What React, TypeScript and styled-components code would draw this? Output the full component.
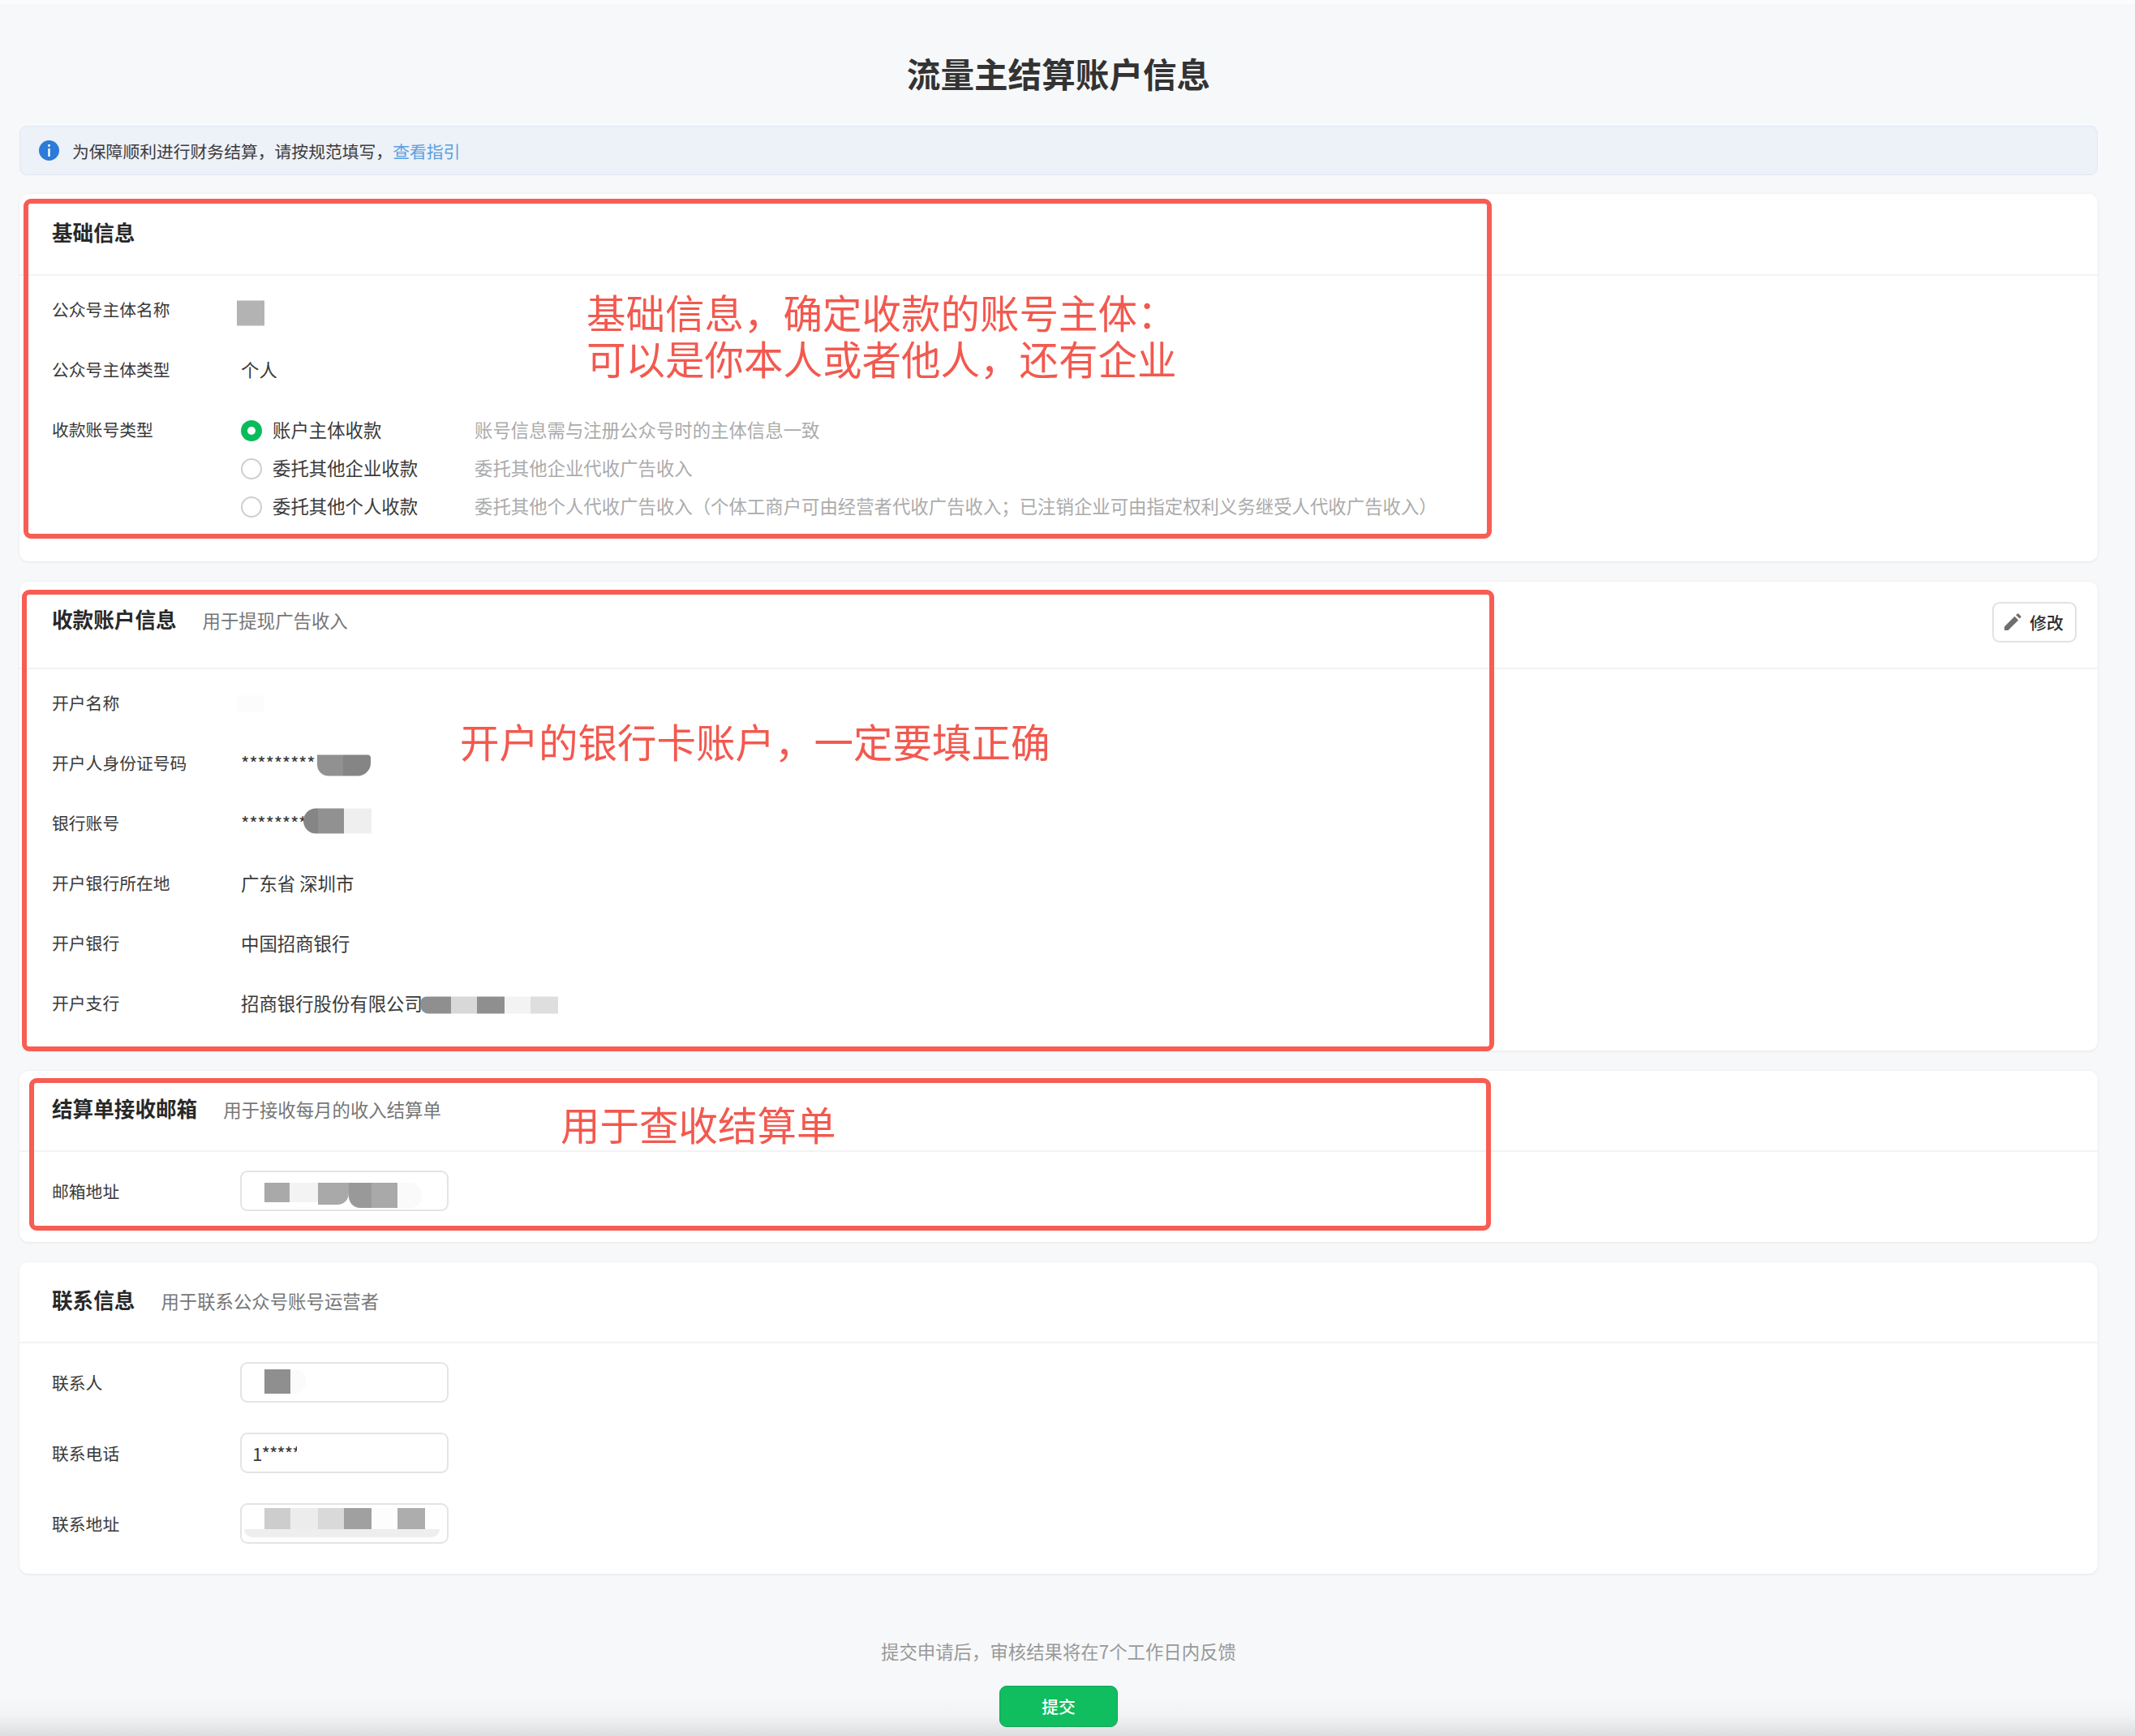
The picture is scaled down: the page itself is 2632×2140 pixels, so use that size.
import React from "react";
import styled, { createGlobalStyle } from "styled-components";

const Global = createGlobalStyle`
  html, body { margin: 0; padding: 0; background: #f7f8fa; }
  body { font-family: "Noto Sans CJK SC", "Noto Sans", sans-serif; color: #333; }
  * { box-sizing: border-box; }
`;

const Page = styled.div`
  width: 2632px;
  height: 2140px;
  overflow: hidden;
  padding: 0 46px 0 24px;
  border-top: 5px solid #fcfcfc;
  background: linear-gradient(to bottom, #f7f8fa 0, #f7f8fa 2085px, #f2f3f4 2110px, #dddee0 2135px);
`;

const Title = styled.h1`
  margin: 0;
  height: 150px;
  padding-top: 63px;
  font-size: 41.6px;
  line-height: 44px;
  font-weight: 600;
  text-align: center;
  color: #333;
`;

const Notice = styled.div`
  height: 61px;
  margin-bottom: 23px;
  padding-left: 23px;
  display: flex;
  align-items: center;
  gap: 16px;
  background: #edf1f8;
  border: 1.5px solid #e0e7f3;
  border-radius: 9px;
  font-size: 20.8px;
  color: #3c3c3c;
`;

const NoticeLink = styled.a`
  color: #5a9fe0;
`;

const Card = styled.section`
  position: relative;
  background: #fff;
  border-radius: 11px;
  box-shadow: 0 0 3px rgba(0, 0, 0, 0.07), 0 2px 3px rgba(0, 0, 0, 0.03);
  margin-bottom: 25px;
`;

const CardHeader = styled.header<{ $h: number; $top?: number }>`
  height: ${(p) => p.$h}px;
  padding: ${(p) => p.$top ?? 30}px 40px 0;
  display: flex;
  align-items: flex-start;
  justify-content: space-between;
  border-bottom: 2px solid #f3f3f3;
`;

const HeadText = styled.div`
  display: flex;
  align-items: baseline;
  gap: 32px;
`;

const CardTitle = styled.h2`
  margin: 0;
  font-size: 25.6px;
  line-height: 32px;
  font-weight: 700;
  color: #282828;
`;

const CardSub = styled.span`
  font-size: 22.4px;
  line-height: 32px;
  color: #767676;
`;

const EditButton = styled.button`
  margin-top: -5px;
  margin-right: -14px;
  width: 104px;
  height: 50px;
  padding: 0 2px 0 0;
  display: flex;
  align-items: center;
  justify-content: center;
  gap: 10px;
  background: #fff;
  border: 2px solid #e2e2e2;
  border-radius: 9px;
  font-family: inherit;
  font-size: 20.8px;
  font-weight: 500;
  color: #2e2e2e;
`;

const Rows = styled.div<{ $bottom: number }>`
  padding: 6px 40px ${(p) => p.$bottom}px;
`;

const Row = styled.div`
  display: flex;
  align-items: flex-start;
  padding: 21px 0;
`;

const Label = styled.div`
  width: 233px;
  flex: none;
  height: 32px;
  font-size: 20.8px;
  line-height: 29px;
  color: #3a3a3a;
`;

const FieldLabel = styled(Label)`
  line-height: 32px;
`;

const Value = styled.div`
  display: flex;
  align-items: center;
  height: 32px;
  padding-bottom: 3px;
  font-size: 22.4px;
  line-height: 29px;
  color: #3a3a3a;
  white-space: nowrap;
`;

const Stars = styled.span`
  font-size: 22.4px;
  letter-spacing: -0.3px;
`;

const PatchRow = styled.span<{ $ml?: number; $dy?: number }>`
  display: inline-flex;
  margin-left: ${(p) => p.$ml ?? 0}px;
  transform: translateY(${(p) => p.$dy ?? 0}px);
  flex: none;
`;

const Patch = styled.i<{ $w: number; $h: number; $c: string; $r?: string }>`
  display: block;
  width: ${(p) => p.$w}px;
  height: ${(p) => p.$h}px;
  background: ${(p) => p.$c};
  border-radius: ${(p) => p.$r ?? "0"};
`;

const Options = styled.div`
  display: flex;
  flex-direction: column;
  gap: 15px;
`;

const Option = styled.div`
  display: flex;
  align-items: center;
  height: 32px;
  font-size: 22.4px;
  white-space: nowrap;
`;

const RadioMark = styled.span<{ $on?: boolean }>`
  width: 26px;
  height: 26px;
  flex: none;
  margin-right: 13px;
  border-radius: 50%;
  background: #fff;
  border: ${(p) => (p.$on ? "8px solid #09bb5b" : "2px solid #cfcfcf")};
`;

const OptionName = styled.span`
  width: 249px;
  height: 32px;
  line-height: 29px;
  flex: none;
  color: #3a3a3a;
`;

const OptionHint = styled.span`
  height: 32px;
  line-height: 29px;
  color: #ababab;
`;

const FieldRow = styled.div<{ $gap?: number }>`
  display: flex;
  align-items: center;
  height: 50px;
  margin-bottom: ${(p) => p.$gap ?? 0}px;
`;

const FieldRows = styled.div<{ $bottom: number }>`
  padding: 23px 40px ${(p) => p.$bottom}px;
`;

const Field = styled.div`
  position: relative;
  width: 257px;
  height: 50px;
  margin-left: -1px;
  border: 2px solid #e4e4e4;
  border-radius: 9px;
  background: #fff;
  overflow: hidden;
  padding: 7px 0 0 28px;
  display: flex;
  align-items: flex-start;
`;

const FieldText = styled.span`
  margin: 0 0 0 -15px;
  font-size: 22.4px;
  line-height: 32px;
  letter-spacing: -1px;
  color: #3a3a3a;
  white-space: nowrap;
`;

const FieldMask = styled.span`
  position: absolute;
  left: 68px;
  top: 8px;
  width: 16px;
  height: 26px;
  background: #fff;
`;

const FieldStain = styled.span`
  position: absolute;
  left: 3px;
  right: 9px;
  bottom: 6px;
  height: 10px;
  background: #eeeeee;
  border-radius: 0 0 10px 10px;
`;

const Annotation = styled.div<{ $left: number; $top: number }>`
  position: absolute;
  left: ${(p) => p.$left}px;
  top: ${(p) => p.$top}px;
  font-size: 48.5px;
  line-height: 57px;
  color: #f2594f;
  white-space: nowrap;
`;

const Frame = styled.div<{ $left: number; $top: number; $w: number; $h: number }>`
  position: absolute;
  left: ${(p) => p.$left}px;
  top: ${(p) => p.$top}px;
  width: ${(p) => p.$w}px;
  height: ${(p) => p.$h}px;
  border: 6px solid #f75d52;
  border-radius: 9px;
  pointer-events: none;
`;

const Footer = styled.footer`
  padding-top: 56px;
  display: flex;
  flex-direction: column;
  align-items: center;
  gap: 25px;
`;

const FooterNote = styled.p`
  margin: 0;
  height: 32px;
  font-size: 22.4px;
  line-height: 29px;
  color: #999;
`;

const SubmitButton = styled.button`
  width: 146px;
  height: 51px;
  padding: 0 0 1px;
  border: 1.5px solid #17a358;
  border-radius: 9px;
  background: #10bd5f;
  color: #fff;
  font-family: inherit;
  font-size: 20.8px;
  font-weight: 500;
`;

const InfoIcon = () => (
  <svg width="25" height="25" viewBox="0 0 25 25" aria-hidden="true" style={{ flex: "none" }}>
    <circle cx="12.5" cy="12.5" r="12.5" fill="#2b7bd9" />
    <rect x="11.3" y="5" width="2.4" height="2.8" fill="#fff" />
    <rect x="11.3" y="10" width="2.4" height="10" fill="#fff" />
  </svg>
);

const PencilIcon = () => (
  <svg width="22" height="22" viewBox="0 0 22 22" aria-hidden="true" style={{ flex: "none" }}>
    <path d="M1 21v-4.6L13.6 3.8l4.6 4.6L5.6 21z" fill="#6f6f6f" />
    <path d="M15.2 2.2L17 .6a1 1 0 0 1 1.3 0l3 3a1 1 0 0 1 0 1.3l-1.6 1.7z" fill="#6f6f6f" />
  </svg>
);

const OPTIONS = [
  { name: "账户主体收款", hint: "账号信息需与注册公众号时的主体信息一致", on: true },
  { name: "委托其他企业收款", hint: "委托其他企业代收广告收入" },
  {
    name: "委托其他个人收款",
    hint: "委托其他个人代收广告收入（个体工商户可由经营者代收广告收入；已注销企业可由指定权利义务继受人代收广告收入）",
  },
];

export default function App() {
  return (
    <>
      <Global />
      <Page>
        <Title>流量主结算账户信息</Title>

        <Notice>
          <InfoIcon />
          <span>
            为保障顺利进行财务结算，请按规范填写，<NoticeLink>查看指引</NoticeLink>
          </span>
        </Notice>

        <Card>
          <CardHeader $h={101} $top={31}>
            <CardTitle>基础信息</CardTitle>
          </CardHeader>
          <Rows $bottom={30.4}>
            <Row>
              <Label>公众号主体名称</Label>
              <Value>
                <PatchRow $ml={-5} $dy={4.5}>
                  <Patch $w={34} $h={31} $c="#b3b3b3" />
                </PatchRow>
              </Value>
            </Row>
            <Row>
              <Label>公众号主体类型</Label>
              <Value>个人</Value>
            </Row>
            <Row>
              <Label>收款账号类型</Label>
              <Options>
                {OPTIONS.map((o) => (
                  <Option key={o.name}>
                    <RadioMark $on={o.on} />
                    <OptionName>{o.name}</OptionName>
                    <OptionHint>{o.hint}</OptionHint>
                  </Option>
                ))}
              </Options>
            </Row>
          </Rows>
          <Frame $left={5} $top={6} $w={1810} $h={419} />
          <Annotation $left={699} $top={116.5}>
            基础信息，确定收款的账号主体：
            <br />
            可以是你本人或者他人，还有企业
          </Annotation>
        </Card>

        <Card>
          <CardHeader $h={108}>
            <HeadText>
              <CardTitle>收款账户信息</CardTitle>
              <CardSub>用于提现广告收入</CardSub>
            </HeadText>
            <EditButton>
              <PencilIcon />
              修改
            </EditButton>
          </CardHeader>
          <Rows $bottom={20}>
            <Row>
              <Label>开户名称</Label>
              <Value>
                <PatchRow $ml={-5} $dy={0.5}>
                  <Patch $w={33} $h={20} $c="#fcfcfc" />
                </PatchRow>
              </Value>
            </Row>
            <Row>
              <Label>开户人身份证号码</Label>
              <Value>
                <Stars>*********</Stars>
                <PatchRow $ml={2.2} $dy={2.5}>
                  <Patch $w={32} $h={26} $c="#919191" $r="0 0 0 14px" />
                  <Patch $w={34} $h={26} $c="#858585" $r="0 4px 16px 0" />
                </PatchRow>
              </Value>
            </Row>
            <Row>
              <Label>银行账号</Label>
              <Value>
                <Stars>********</Stars>
                <PatchRow $ml={-4.6} $dy={-2.5}>
                  <Patch $w={18} $h={31} $c="#858585" $r="16px 0 0 16px" />
                  <Patch $w={32} $h={31} $c="#919191" />
                  <Patch $w={34} $h={31} $c="#efefef" />
                </PatchRow>
              </Value>
            </Row>
            <Row>
              <Label>开户银行所在地</Label>
              <Value>广东省 深圳市</Value>
            </Row>
            <Row>
              <Label>开户银行</Label>
              <Value>中国招商银行</Value>
            </Row>
            <Row>
              <Label>开户支行</Label>
              <Value>
                招商银行股份有限公司
                <PatchRow $ml={-3} $dy={2.5}>
                  <Patch $w={38} $h={21} $c="#8f8f8f" $r="8px 0 0 10px" />
                  <Patch $w={32} $h={21} $c="#d8d8d8" />
                  <Patch $w={34} $h={21} $c="#8f8f8f" />
                  <Patch $w={32} $h={21} $c="#f3f3f3" />
                  <Patch $w={34} $h={21} $c="#dedede" />
                </PatchRow>
              </Value>
            </Row>
          </Rows>
          <Frame $left={3} $top={10} $w={1815} $h={569} />
          <Annotation $left={543} $top={168}>
            开户的银行卡账户，一定要填正确
          </Annotation>
        </Card>

        <Card>
          <CardHeader $h={100}>
            <HeadText>
              <CardTitle>结算单接收邮箱</CardTitle>
              <CardSub>用于接收每月的收入结算单</CardSub>
            </HeadText>
          </CardHeader>
          <FieldRows $bottom={38}>
            <FieldRow>
              <FieldLabel>邮箱地址</FieldLabel>
              <Field>
                <PatchRow $dy={6}>
                  <Patch $w={31} $h={24} $c="#a9a9a9" />
                  <Patch $w={35} $h={24} $c="#f3f3f3" />
                  <Patch $w={38} $h={27} $c="#a9a9a9" $r="0 0 14px 0" />
                  <Patch $w={28} $h={31} $c="#999999" $r="0 0 0 14px" />
                  <Patch $w={32} $h={31} $c="#a9a9a9" />
                  <Patch $w={30} $h={31} $c="#fafafa" $r="0 14px 14px 0" />
                </PatchRow>
              </Field>
            </FieldRow>
          </FieldRows>
          <Frame $left={12} $top={9} $w={1802} $h={188} />
          <Annotation $left={667} $top={37}>
            用于查收结算单
          </Annotation>
        </Card>

        <Card>
          <CardHeader $h={100}>
            <HeadText>
              <CardTitle>联系信息</CardTitle>
              <CardSub>用于联系公众号账号运营者</CardSub>
            </HeadText>
          </CardHeader>
          <FieldRows $bottom={37}>
            <FieldRow $gap={37}>
              <FieldLabel>联系人</FieldLabel>
              <Field>
                <PatchRow>
                  <Patch $w={32} $h={30} $c="#8f8f8f" />
                  <Patch $w={19} $h={30} $c="#fbfbfb" $r="0 14px 14px 0" />
                </PatchRow>
              </Field>
            </FieldRow>
            <FieldRow $gap={36.5}>
              <FieldLabel>联系电话</FieldLabel>
              <Field>
                <FieldText>1*****</FieldText>
                <FieldMask />
              </Field>
            </FieldRow>
            <FieldRow>
              <FieldLabel>联系地址</FieldLabel>
              <Field>
                <PatchRow $dy={-3}>
                  <Patch $w={32} $h={29} $c="#cdcdcd" />
                  <Patch $w={34} $h={29} $c="#ececec" />
                  <Patch $w={32} $h={29} $c="#d9d9d9" />
                  <Patch $w={34} $h={29} $c="#a0a0a0" />
                  <Patch $w={32} $h={29} $c="#fdfdfd" />
                  <Patch $w={34} $h={29} $c="#adadad" />
                </PatchRow>
                <FieldStain />
              </Field>
            </FieldRow>
          </FieldRows>
        </Card>

        <Footer>
          <FooterNote>提交申请后，审核结果将在7个工作日内反馈</FooterNote>
          <SubmitButton>提交</SubmitButton>
        </Footer>
      </Page>
    </>
  );
}
